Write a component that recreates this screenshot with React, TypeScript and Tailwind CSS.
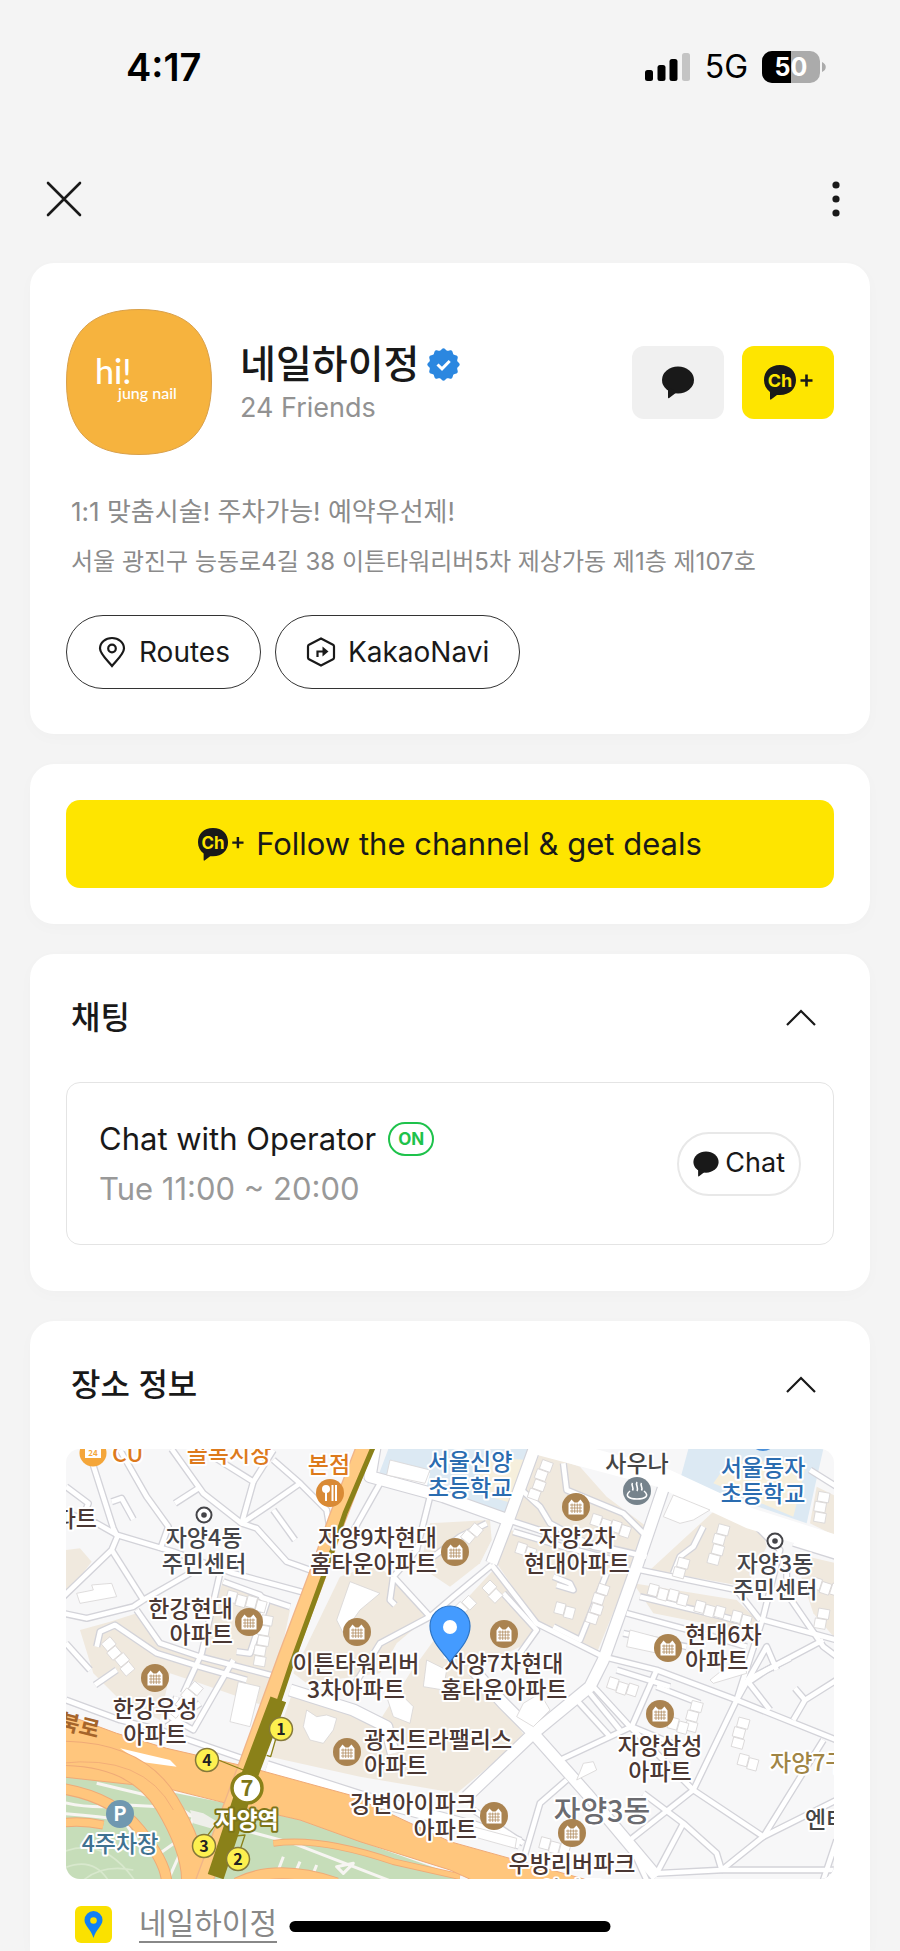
import { useState, type ReactNode } from "react";

const FONT = "font-['Inter','Noto_Sans_CJK_KR',sans-serif]";

function StatusBar() {
  return (
    <div className="flex h-[134px] items-center justify-between pl-[126px] pr-[74px]">
      <span className="text-[38px] font-semibold leading-none text-black">4:17</span>
      <div className="flex items-center gap-[14px]">
        <svg width="46" height="28" viewBox="0 0 46 28">
          <rect x="0" y="17" width="8" height="11" rx="2.5" />
          <rect x="12.500" y="12" width="8" height="16" rx="2.5" />
          <rect x="24.500" y="6" width="8" height="22" rx="2.5" />
          <rect x="37" y="0" width="8" height="28" rx="2.5" fill="#c4c4c4" />
        </svg>
        <span className="text-[32px] leading-none text-black">5G</span>
        <svg width="64" height="32" viewBox="0 0 64 32">
          <defs>
            <clipPath id="battery">
              <rect width="58" height="32" rx="10" />
            </clipPath>
          </defs>
          <g clipPath="url(#battery)">
            <rect width="58" height="32" fill="#ababab" />
            <rect width="29" height="32" fill="#000" />
          </g>
          <path d="M60 11c5 2 5 8 0 10z" fill="#ababab" />
          <text x="29" y="25" textAnchor="middle" fill="#fff" className="text-[25px] font-bold">
            50
          </text>
        </svg>
      </div>
    </div>
  );
}

function TopNav() {
  return (
    <nav className="flex h-[129px] items-center justify-between px-[46px]">
      <button type="button" aria-label="Close">
        <svg width="36" height="36" viewBox="0 0 36 36" stroke="#191919" strokeWidth="2.6" strokeLinecap="round">
          <path d="M2 2l32 32M34 2L2 34" />
        </svg>
      </button>
      <button type="button" aria-label="More">
        <svg width="36" height="36" viewBox="0 0 36 36" fill="#191919">
          <circle cx="18" cy="4" r="3.600" />
          <circle cx="18" cy="18" r="3.600" />
          <circle cx="18" cy="32" r="3.600" />
        </svg>
      </button>
    </nav>
  );
}

function Bubble({ className }: { className?: string }) {
  return (
    <svg viewBox="0 0 32 33" className={className} fill="#191919">
      <ellipse cx="16" cy="14" rx="16" ry="13.500" />
      <path d="M6 21v10.500c0 .8.600 1 1.200.500L15 26z" />
    </svg>
  );
}

function ChannelAdd({ className }: { className?: string }) {
  return (
    <svg viewBox="0 0 49 35" className={className}>
      <path
        d="M16 0C26 0 32 6.500 32 15s-6 15-16 15h-3l-6 4.600c-.5.300-1 0-1-.6V27C2 24 0 20 0 15 0 6.500 6 0 16 0z"
        fill="#191919"
      />
      <text x="16" y="22" textAnchor="middle" fill="#fee500" className="text-[18px] font-bold">
        Ch
      </text>
      <path d="M42.500 9.500v12M36.500 15.500h12" stroke="#191919" strokeWidth="2.600" />
    </svg>
  );
}

// Twelve rounded lobes around the badge centre
const badgePath =
  Array.from({ length: 144 }, (_, i) => {
    const a = (i / 144) * Math.PI * 2;
    const r = 15.2 + Math.cos(a * 12);
    const x = (16.5 + r * Math.sin(a)).toFixed(2);
    const y = (16.5 - r * Math.cos(a)).toFixed(2);
    return `${i ? "L" : "M"}${x} ${y}`;
  }).join("") + "Z";

function VerifiedBadge() {
  return (
    <svg width="33" height="33" viewBox="0 0 33 33">
      <path d={badgePath} fill="#2b87e0" />
      <path d="M10.500 16.500l4.500 4.300 7.700-7.800" fill="none" stroke="#fff" strokeWidth="3" />
    </svg>
  );
}

function Avatar() {
  return (
    <svg width="146" height="146" viewBox="0 0 146 146" className="shrink-0">
      <path
        d="M73 .5C122 .5 145.500 24 145.500 73S122 145.500 73 145.500.5 122 .5 73 24 .5 73 .5z"
        fill="#f6b33e"
        stroke="#d9a04a"
      />
      <g fill="#fff" className="font-['Lato',sans-serif]">
        <text x="29" y="75" className="text-[34px] font-medium">
          hi!
        </text>
        <text x="52" y="90" className="text-[16px] font-medium">
          jung nail
        </text>
      </g>
    </svg>
  );
}

function Card({ children, className = "" }: { children: ReactNode; className?: string }) {
  return (
    <section className={`rounded-3xl bg-white px-9 shadow-[0_4px_16px_rgba(0,0,0,0.02)] ${className}`}>
      {children}
    </section>
  );
}

function SectionHeader({ title, open, onToggle }: { title: string; open: boolean; onToggle: () => void }) {
  return (
    <button
      type="button"
      aria-expanded={open}
      onClick={onToggle}
      className="flex h-32 w-full items-center justify-between pl-[5px] pr-[18px]"
    >
      <span className="text-[32px] font-medium leading-none text-[#191919]">{title}</span>
      <svg
        width="30"
        height="18"
        viewBox="0 0 30 18"
        fill="none"
        stroke="#191919"
        strokeWidth="2.200"
        className={open ? "" : "rotate-180"}
      >
        <path d="M1 16L15 2l14 14" />
      </svg>
    </button>
  );
}

function ProfileCard() {
  return (
    <Card className="pb-[45px] pt-[46px]">
      <div className="flex items-center">
        <Avatar />
        <div className="ml-7 flex-1 pt-[6px]">
          <div className="flex items-center gap-2">
            <h1 className="text-[39px] font-medium leading-[46px] text-[#191919]">네일하이정</h1>
            <VerifiedBadge />
          </div>
          <p className="text-[27px] leading-[42px] text-[#929292]">24 Friends</p>
        </div>
        <div className="flex gap-[18px]">
          <button
            type="button"
            aria-label="Chat"
            className="flex h-[73px] w-[92px] items-center justify-center rounded-xl bg-[#f0f0f0]"
          >
            <Bubble className="h-[33px] w-8" />
          </button>
          <button
            type="button"
            aria-label="Add channel"
            className="flex h-[73px] w-[92px] items-center justify-center rounded-xl bg-[#fee500]"
          >
            <ChannelAdd className="h-[35px] w-[49px]" />
          </button>
        </div>
      </div>
      <div className="mt-8 pl-[5px] leading-[50px] text-[#8b8b8b]">
        <p className="text-[26px]">1:1 맞춤시술! 주차가능! 예약우선제!</p>
        <p className="text-2xl leading-[50px]">서울 광진구 능동로4길 38 이튼타워리버5차 제상가동 제1층 제107호</p>
      </div>
      <div className="mt-7 flex gap-[14px]">
        <button
          type="button"
          className="flex h-[74px] items-center gap-3 rounded-full border-[1.500px] border-[#333] px-[30px] text-[28px] text-[#191919]"
        >
          <svg width="30" height="32" viewBox="0 0 30 32" fill="none" stroke="#191919" strokeWidth="2.200">
            <path d="M15 30C9 23 3 17.500 3 12.500 3 6.500 8.500 2 15 2s12 4.500 12 10.500C27 17.500 21 23 15 30z" />
            <circle cx="15" cy="12.500" r="3.800" />
          </svg>
          Routes
        </button>
        <button
          type="button"
          className="flex h-[74px] items-center gap-3 rounded-full border-[1.500px] border-[#333] px-[30px] text-[28px] text-[#191919]"
        >
          <svg width="30" height="32" viewBox="0 0 30 32" fill="none" stroke="#191919" strokeWidth="2.200">
            <path d="M15 2.500l12 6.200c.8.400 1 1 1 1.800v11c0 .8-.2 1.400-1 1.800L15 29.500 3 23.300c-.8-.4-1-1-1-1.800v-11c0-.8.200-1.400 1-1.800z" />
            <path d="M11.500 21v-5.500h6" />
            <path d="M16.500 10.500l6 5-6 5z" fill="#191919" stroke="none" />
          </svg>
          KakaoNavi
        </button>
      </div>
    </Card>
  );
}

function ChatCard() {
  const [open, setOpen] = useState(true);
  return (
    <Card className="pb-[46px]">
      <SectionHeader title="채팅" open={open} onToggle={() => setOpen(!open)} />
      {open && (
        <div className="flex h-[163px] items-center justify-between rounded-[14px] border border-[#e4e4e4] px-8">
          <div className="text-[31px] leading-[50px]">
            <div className="flex items-center gap-3">
              <span className="text-[#191919]">Chat with Operator</span>
              <span className="flex h-[34px] items-center rounded-full border-[2px] border-[#1ec24b] px-2 text-[17px] font-bold text-[#1ec24b]">
                ON
              </span>
            </div>
            <p className="text-[#999]">Tue 11:00 ~ 20:00</p>
          </div>
          <button
            type="button"
            className="flex h-16 items-center gap-[6px] rounded-full border-2 border-[#e8e8e8] px-[14px] text-[27px] text-[#191919]"
          >
            <Bubble className="h-[26px] w-[26px]" />
            Chat
          </button>
        </div>
      )}
    </Card>
  );
}

const blue = "#2a6cb0";
const brown = "#4a3733";

// Areas of the map. Units of the terrain are a third of a pixel.
const beige = [
  "M18 330L60 325L95 365L30 450H18Z",
  "M60 570L150 545L230 520L300 615L390 640L560 680L640 700L620 800L420 730L330 700L300 840L180 780L100 700Z",
  "M490 420L600 455L690 510L650 700L420 640L440 570Z",
  "M840 410L950 370L1105 530L1010 610L960 700L740 730L700 700Z",
  "M700 750L860 790L960 840L1050 700L1180 520L1300 390L1440 560L1380 620L1240 690L1330 790L1395 890L1190 1060L900 1010L630 950Z",
  "M1110 250L1290 240L1295 300L1260 370L1170 440L1080 380Z",
  "M1440 40L1560 80L1640 170L1760 260L1740 380L1590 330L1350 230Z",
  "M1350 270L1720 370L1610 640L1440 560L1310 370Z",
  "M1960 215L2100 240L2120 320L2060 440L1770 390Z",
  "M1720 430L2030 480L2090 540L2080 580L1780 520Z",
  "M2270 140L2330 170V290L2250 250Z",
  "M2200 340L2330 370V600L2260 520Z",
];

const water = [
  "M985 27H1425L1340 240L950 120Z",
  "M1885 27H2290L2240 250L1860 120Z",
];

const minorRoads = [
  "M85 30L160 265L172 290L155 330L10 470",
  "M10 215L110 250L172 285L340 335L520 400L740 460",
  "M155 330L250 480",
  "M10 520L80 535L220 500L250 480L390 400",
  "M180 30L260 170L325 260L300 330",
  "M335 27L430 160L545 250L620 200L720 130L640 60",
  "M460 50L580 125L545 250",
  "M580 125L640 30",
  "M720 130L800 210L810 270",
  "M640 210L705 300",
  "M545 250L590 265L680 365L750 390",
  "M345 190L415 145",
  "M155 185L185 175L220 238",
  "M18 140L85 190L75 215",
  "M230 510L300 610L420 650L650 710",
  "M480 400L425 640L370 760",
  "M600 470L690 500",
  "M110 620L120 575L165 555L290 640L420 680L560 720",
  "M490 425L600 465L620 490L570 640L530 635",
  "M18 610L90 690",
  "M170 690L105 735",
  "M18 780L180 840L300 870L560 960",
  "M350 770L330 830L400 870L520 660",
  "M320 860L420 790",
  "M960 130L870 290",
  "M1110 170L1070 330L1000 410",
  "M1000 410L990 480L1005 495",
  "M1000 410L1110 530L960 610L880 740",
  "M1080 380L1200 290L1280 250",
  "M1110 530L1180 470L1295 375",
  "M1345 240L1500 290L1760 350",
  "M1385 150L1440 200L1470 250L1600 320L1700 340",
  "M1510 70L1520 150L1690 220L1760 290",
  "M1360 275L1510 320L1700 370",
  "M1295 375L1430 550L1630 650L1790 690L2030 780L2330 900",
  "M1330 460L1430 570L1380 640",
  "M1480 410L1530 430L1540 450L1490 435",
  "M1640 400L1560 600L1480 560",
  "M1740 390L2030 450L2100 540",
  "M1740 470L1990 530L2060 550",
  "M1700 520L1960 590L2060 620",
  "M1690 580L1880 620",
  "M1930 260L1900 320L1860 350L1840 400",
  "M2070 240L2160 330L2110 530L2030 780",
  "M2180 350L2180 460L2290 620L2330 650",
  "M2110 540L2330 600",
  "M2290 600L2120 690L2060 730",
  "M2250 90L2330 140",
  "M2200 310L2330 350",
  "M1500 960L1715 860L1790 690",
  "M1550 780L1650 890",
  "M1600 740L1710 860L1900 1050L2110 1190L2330 1080",
  "M1590 760L1680 870",
  "M1670 690L1830 740",
  "M1790 740L1920 790",
  "M2150 690L2120 620L2030 780L1900 1050L1710 1200",
  "M1715 860L1860 920",
  "M2060 720L2130 810",
  "M2330 720L2235 780L2200 840",
  "M2205 745L2235 780",
  "M2060 720L2190 655",
  "M1750 1060L1870 1150L1970 1240L1985 1290",
  "M1870 1150L1790 1300",
  "M2290 900L2110 1190L1985 1290L1790 1300",
  "M1985 1290L2330 1290",
  "M2330 1200L2290 1320",
  "M1520 1020L1440 1090L1390 1260",
  "M1240 1110L1390 1210",
  "M1700 1190L1760 1320",
];

const majorRoads = [
  "M945 20L930 110L1150 170L1345 240",
  "M1425 20L1345 240L1295 370",
  "M1420 10L1800 110L2070 235L2340 320",
  "M1815 130L1730 380L1630 660L1590 740L1420 880",
  "M1240 690L1330 790L1420 880L1220 1070",
  "M1420 880L1580 1060L1790 1310",
  "M690 750L880 810L980 860L1000 940",
  "M620 980L900 1070L1240 1160L1380 1210",
];

// x, y, angle, number of units in the row
const blocks: [number, number, number, number][] = [
  [505, 450, 15, 4],
  [640, 530, 100, 5],
  [150, 590, 50, 4],
  [430, 745, 130, 4],
  [1480, 70, 110, 4],
  [1600, 220, 18, 4],
  [1375, 305, 18, 2],
  [1650, 440, 108, 4],
  [2010, 260, 105, 4],
  [1770, 430, 15, 4],
  [1910, 480, 15, 3],
  [2020, 510, 15, 2],
  [1490, 485, 15, 2],
  [1290, 420, 45, 2],
  [1250, 490, 135, 2],
  [1890, 360, 105, 2],
  [1650, 710, 18, 3],
  [1930, 790, 105, 3],
  [1830, 830, 15, 2],
  [2070, 840, 105, 3],
  [2040, 940, 15, 2],
  [1445, 1190, 15, 3],
  [2260, 410, 18, 3],
  [2310, 160, 100, 3],
  [2310, 510, 100, 2],
  [1270, 270, 130, 2],
];

const plainBuildings = [
  "M50 460L100 450L95 435L155 430L170 470L60 490Z",
  "M870 425L960 460L900 510L850 580L830 540Z",
  "M535 725L600 740L570 860L510 845Z",
  "M990 60L1110 90L1095 130L980 105Z",
  "M1840 165L1950 210L1900 240L1860 250L1810 230Z",
  "M1710 570L1860 610L1840 650L1700 620Z",
  "M1570 970L1600 965L1610 990L1550 1020Z",
  "M1240 1160L1370 1195L1365 1225L1240 1190Z",
  "M1390 790L1440 760L1470 810L1420 860L1370 830Z",
  "M740 810L770 830L800 825L830 835L820 870L790 910L750 900L730 860Z",
  "M980 770L1030 770L1060 800L1050 850L1000 830Z",
  "M1100 660L1160 690L1150 750L1090 740Z",
  "M2050 640L2060 700L1960 730L1950 720Z",
];

function Terrain() {
  return (
    <g transform="translate(-6 -9) scale(0.33333)" strokeLinejoin="round">
      <rect x="0" y="0" width="2350" height="1350" fill="#f7f7f8" />
      <g fill="#f0e9de">
        {beige.map((d) => (
          <path key={d} d={d} />
        ))}
      </g>
      <g fill="#dce9f3">
        {water.map((d) => (
          <path key={d} d={d} />
        ))}
      </g>
      <path d="M1270 50L1400 60L1360 190L1250 160ZM2010 60L2240 70L2200 230L1960 130Z" fill="#f6efdc" />
      <path d="M995 60L1110 100L1100 140L980 115Z" fill="#fff" />

      <g fill="none" stroke="#d3d3d9" strokeWidth="22">
        {minorRoads.map((d) => (
          <path key={d} d={d} />
        ))}
      </g>
      <g fill="none" stroke="#d3d3d9" strokeWidth="40">
        {majorRoads.map((d) => (
          <path key={d} d={d} />
        ))}
      </g>
      <g fill="none" stroke="#fff" strokeWidth="14">
        {minorRoads.map((d) => (
          <path key={d} d={d} />
        ))}
      </g>
      <g fill="none" stroke="#fff" strokeWidth="33">
        {majorRoads.map((d) => (
          <path key={d} d={d} />
        ))}
      </g>
      <path d="M1420 10L1800 110L2070 235L2340 320" fill="none" stroke="#fff" strokeWidth="62" />

      <g fill="#fff" stroke="#d9d6d6" strokeWidth="2.500">
        {blocks.map(([x, y, angle, count]) => (
          <g key={`${x}-${y}`} transform={`translate(${x} ${y}) rotate(${angle})`}>
            {Array.from({ length: count }, (_, i) => (
              <rect key={i} x={i * 31} y={i % 2 ? 5 : 0} width="29" height="34" />
            ))}
          </g>
        ))}
        {plainBuildings.map((d) => (
          <path key={d} d={d} />
        ))}
      </g>

      {/* Riverside park and expressway */}
      <path d="M0 990L500 1090L720 1140L1200 1310V1340H0Z" fill="#c6ddb9" />
      <path d="M0 1240Q130 1180 230 1330M0 1290Q100 1240 150 1330M60 1330Q120 1270 220 1290" fill="none" stroke="#d8e8cd" strokeWidth="5" />
      <g fill="none" stroke="#f7f5f2" strokeWidth="9">
        <path d="M0 1085Q100 1110 200 1095L300 1100L400 1130L700 1210L1010 1330" />
        <path d="M110 1030L320 1080L400 1130L360 1240L320 1330" />
        <path d="M300 1240L370 1190M670 1250L655 1290M720 1265L705 1300M770 1275L760 1300M830 1280L880 1270L850 1300Z" />
        <path d="M0 1120Q120 1130 190 1140L230 1200" />
      </g>
      <path d="M390 1110L430 1120L480 1150L470 1170L400 1150Z" fill="#efefea" />
      <g fill="none" strokeLinecap="butt">
        <path d="M0 1045Q160 1070 240 1170T320 1330" stroke="#efaa77" strokeWidth="34" />
        <path d="M0 1045Q160 1070 240 1170T320 1330" stroke="#ffc67d" strokeWidth="28" />
        <path d="M0 1150Q60 1140 130 1155" stroke="#efaa77" strokeWidth="28" />
        <path d="M0 1150Q60 1140 130 1155" stroke="#ffc67d" strokeWidth="22" />
        <path d="M530 1330Q650 1270 830 1330" stroke="#efaa77" strokeWidth="36" />
        <path d="M530 1330Q650 1270 830 1330" stroke="#ffc67d" strokeWidth="30" />
        <path d="M640 1210Q780 1190 1000 1265L1200 1310" stroke="#efaa77" strokeWidth="20" />
        <path d="M640 1210Q780 1190 1000 1265L1200 1310" stroke="#ffc67d" strokeWidth="15" />
      </g>
      <path
        d="M0 817L170 880L320 925L560 980L870 1065L1170 1205L1600 1325V1345H1290L1170 1290L900 1205L720 1140L500 1090L320 1045L0 1010Z"
        fill="#ffc67d"
        stroke="#efaa77"
        strokeWidth="3"
      />
      <path d="M180 925L330 960L350 980L240 965Z" fill="#fff" />
      <path d="M0 940Q230 940 320 1090T400 1340" fill="none" stroke="#efaa77" strokeWidth="76" />
      <path d="M0 940Q230 940 320 1090T400 1340" fill="none" stroke="#ffc67d" strokeWidth="70" />
      <path d="M0 970Q250 940 340 1110" fill="none" stroke="#efaa77" strokeWidth="2.500" />

      {/* Avenue with the subway line below it */}
      <path d="M915 20L830 240L770 410L680 650L560 980L430 1330" fill="none" stroke="#f0b488" strokeWidth="54" />
      <path d="M915 20L830 240L770 410L680 650L560 980L430 1330" fill="none" stroke="#ffca83" strokeWidth="46" />
      <path d="M940 20L855 220L790 410L695 670L655 790" fill="none" stroke="#8a8119" strokeWidth="15" />
      <path d="M655 778L560 1030L467 1310" fill="none" stroke="#8a8119" strokeWidth="50" />
      <path
        d="M655 870L632 950L620 946M475 960L550 990M470 1150L440 1190M510 1190L555 1185L540 1230"
        fill="none"
        stroke="#8a8119"
        strokeWidth="4"
      />
    </g>
  );
}

interface Label {
  x: number;
  y: number;
  lines: string[];
  anchor?: "start" | "middle" | "end";
  color?: string;
}

const labels: Label[] = [
  { x: 46, y: 13, lines: ["CU"], anchor: "start", color: "#dd7a1c" },
  { x: 163, y: 13, lines: ["골목시장"], color: "#dd7a1c" },
  { x: 263, y: 24, lines: ["본점"], color: "#dd7a1c" },
  { x: 404, y: 21, lines: ["서울신양", "초등학교"], color: blue },
  { x: 571, y: 23, lines: ["사우나"], color: "#444" },
  { x: 697, y: 27, lines: ["서울동자", "초등학교"], color: blue },
  { x: 31, y: 78, lines: ["아파트"], anchor: "end" },
  { x: 138, y: 97, lines: ["자양4동", "주민센터"], color: "#454549" },
  { x: 371, y: 97, lines: ["자양9차현대", "홈타운아파트"], anchor: "end" },
  { x: 511, y: 97, lines: ["자양2차", "현대아파트"] },
  { x: 709, y: 123, lines: ["자양3동", "주민센터"], color: "#454549" },
  { x: 167, y: 168, lines: ["한강현대", "아파트"], anchor: "end" },
  { x: 619, y: 194, lines: ["현대6차", "아파트"], anchor: "start" },
  { x: 290, y: 223, lines: ["이튼타워리버", "3차아파트"] },
  { x: 438, y: 223, lines: ["자양7차현대", "홈타운아파트"] },
  { x: 89, y: 268, lines: ["한강우성", "아파트"] },
  { x: 298, y: 299, lines: ["광진트라팰리스", "아파트"], anchor: "start" },
  { x: 594, y: 305, lines: ["자양삼성", "아파트"] },
  { x: 704, y: 322, lines: ["자양7구"], anchor: "start", color: "#a08545" },
  { x: 411, y: 363, lines: ["강변아이파크", "아파트"], anchor: "end" },
  { x: 739, y: 379, lines: ["엔터"], anchor: "start", color: "#444" },
  { x: 54, y: 403, lines: ["4주차장"], color: "#3f7291" },
  { x: 506, y: 423, lines: ["우방리버파크", "아파트"] },
];

const apartments: [number, number][] = [
  [389, 103],
  [510, 58],
  [183, 173],
  [291, 183],
  [438, 185],
  [602, 199],
  [89, 229],
  [281, 303],
  [594, 265],
  [428, 367],
  [506, 384],
];

const exits: [number, number, number][] = [
  [1, 215, 280],
  [4, 141, 311],
  [3, 138, 397],
  [2, 172, 410],
];

function MapLabel({ x, y, lines, anchor = "middle", color = brown }: Label) {
  return (
    <text
      textAnchor={anchor}
      fill={color}
      stroke="#fff"
      strokeWidth="4"
      strokeLinejoin="round"
      className="text-[23px] font-medium [paint-order:stroke]"
    >
      {lines.map((line, i) => (
        <tspan key={line} x={x} y={y + i * 26}>
          {line}
        </tspan>
      ))}
    </text>
  );
}

function PlaceMap() {
  return (
    <svg
      viewBox="0 0 768 430"
      role="img"
      aria-label="네일하이정"
      className="block h-auto w-full rounded-[14px] font-['Noto_Sans_CJK_KR',sans-serif]"
    >
      <Terrain />
      <text x="536" y="373" textAnchor="middle" fill="#6b6b70" stroke="#fff" strokeWidth="4" className="text-[29px] font-medium [paint-order:stroke]">
        자양3동
      </text>
      <text transform="translate(-8 279) rotate(14)" fill="#a5642a" className="text-[22px] font-bold">
        북로
      </text>
      {labels.map((label) => (
        <MapLabel key={`${label.x}-${label.y}`} {...label} />
      ))}

      {apartments.map(([x, y]) => (
        <g key={`${x}-${y}`} transform={`translate(${x} ${y})`}>
          <circle r="14" fill="#aa8350" />
          <path d="M-7.500 7.500v-11l3-4 3 3h3l3-3 3 4v11z" fill="#fff" />
          <path
            d="M-4-3.500v9.500M-1.300-3.500v9.500M1.300-3.500v9.500M4-3.500v9.500M-6-2h12M-6 1h12M-6 4h12"
            stroke="#aa8350"
            strokeWidth=".7"
          />
        </g>
      ))}

      {[
        [138, 66],
        [709, 92],
      ].map(([x, y]) => (
        <g key={x}>
          <circle cx={x} cy={y} r="7.500" fill="#fff" stroke="#454549" strokeWidth="2" />
          <circle cx={x} cy={y} r="2.800" fill="#454549" />
        </g>
      ))}

      <circle cx="27" cy="4" r="13.500" fill="#f4a63a" />
      <path d="M19 9V0l2-4h12l2 4v9z" fill="#fff" />
      <text x="27" y="7" textAnchor="middle" fill="#f4a63a" className="text-[8px] font-bold">
        24
      </text>

      <circle cx="264" cy="44" r="14" fill="#d98a35" />
      <circle cx="260" cy="40" r="4" fill="#fff" />
      <path d="M260 42v10M266.500 36v16M270 36v16" stroke="#fff" strokeWidth="2" />

      <circle cx="571" cy="42" r="14" fill="#76838c" />
      <path
        d="M566.500 34c-2 2.500 2 4.500 0 7.500M571 33c-2 3 2 5.500 0 9M575.500 34c-2 2.500 2 4.500 0 7.500M564 42c-6 5-1 8 7 8s13-3 7-8"
        fill="none"
        stroke="#fff"
        strokeWidth="1.600"
      />
      <circle cx="697" cy="-12" r="14" fill="#4a8fd8" />

      <circle cx="54" cy="365" r="14" fill="#7098b0" />
      <text x="54" y="372" textAnchor="middle" fill="#fff" className="text-[20px] font-bold">
        P
      </text>

      {exits.map(([n, x, y]) => (
        <g key={n}>
          <circle cx={x} cy={y} r="11.500" fill="#fdf04f" stroke="#85793a" strokeWidth="1.500" />
          <text x={x} y={y + 6} textAnchor="middle" fill="#222" className="text-[16px] font-bold">
            {n}
          </text>
        </g>
      ))}
      <circle cx="181" cy="339" r="15" fill="#fff" stroke="#8a8119" strokeWidth="3.500" />
      <text x="181" y="347" textAnchor="middle" fill="#7d7518" className="text-[22px] font-bold">
        7
      </text>
      <text x="181" y="379" textAnchor="middle" fill="#fff" stroke="#7d7518" strokeWidth="4" strokeLinejoin="round" className="text-[23px] font-bold [paint-order:stroke]">
        자양역
      </text>

      {/* Location pin */}
      <path
        d="M384 213c-5-8-20-20-20-36a20 20 0 0 1 40 0c0 16-15 28-20 36z"
        fill="#449bff"
        stroke="#2d74c4"
        strokeWidth="1.200"
      />
      <circle cx="384" cy="178" r="7" fill="#fff" />
    </svg>
  );
}

function PlaceCard() {
  const [open, setOpen] = useState(true);
  return (
    <Card className="flex-1 rounded-b-none">
      <SectionHeader title="장소 정보" open={open} onToggle={() => setOpen(!open)} />
      {open && (
        <>
          <PlaceMap />
          <div className="flex items-center gap-[27px] px-[9px] pt-[26px]">
            <svg width="37" height="37" viewBox="0 0 37 37">
              <rect width="37" height="37" rx="6" fill="#fae100" />
              <path d="M18.500 32C16 23 9.500 20 9.500 14a9 9 0 0 1 18 0c0 6-6.500 9-9 18z" fill="#1180f5" />
              <circle cx="18.500" cy="14.500" r="3.300" fill="#fae100" />
            </svg>
            <a href="#place" className="border-b-2 border-[#888] text-[30px] leading-[36px] text-[#888]">
              네일하이정
            </a>
          </div>
        </>
      )}
    </Card>
  );
}

export default function App() {
  return (
    <div className={`flex min-h-screen flex-col bg-[#f4f4f4] ${FONT}`}>
      <StatusBar />
      <TopNav />
      <main className="flex flex-1 flex-col gap-[30px] px-[30px]">
        <ProfileCard />
        <Card className="py-9">
          <button
            type="button"
            className="flex h-[88px] w-full items-center justify-center gap-3 rounded-[14px] bg-[#fee500] text-[31px] text-[#191919]"
          >
            <ChannelAdd className="h-[33px] w-[46px]" />
            Follow the channel &amp; get deals
          </button>
        </Card>
        <ChatCard />
        <PlaceCard />
      </main>
      <div className="fixed bottom-[19px] left-1/2 h-[11px] w-[321px] -translate-x-1/2 rounded-full bg-black" />
    </div>
  );
}
